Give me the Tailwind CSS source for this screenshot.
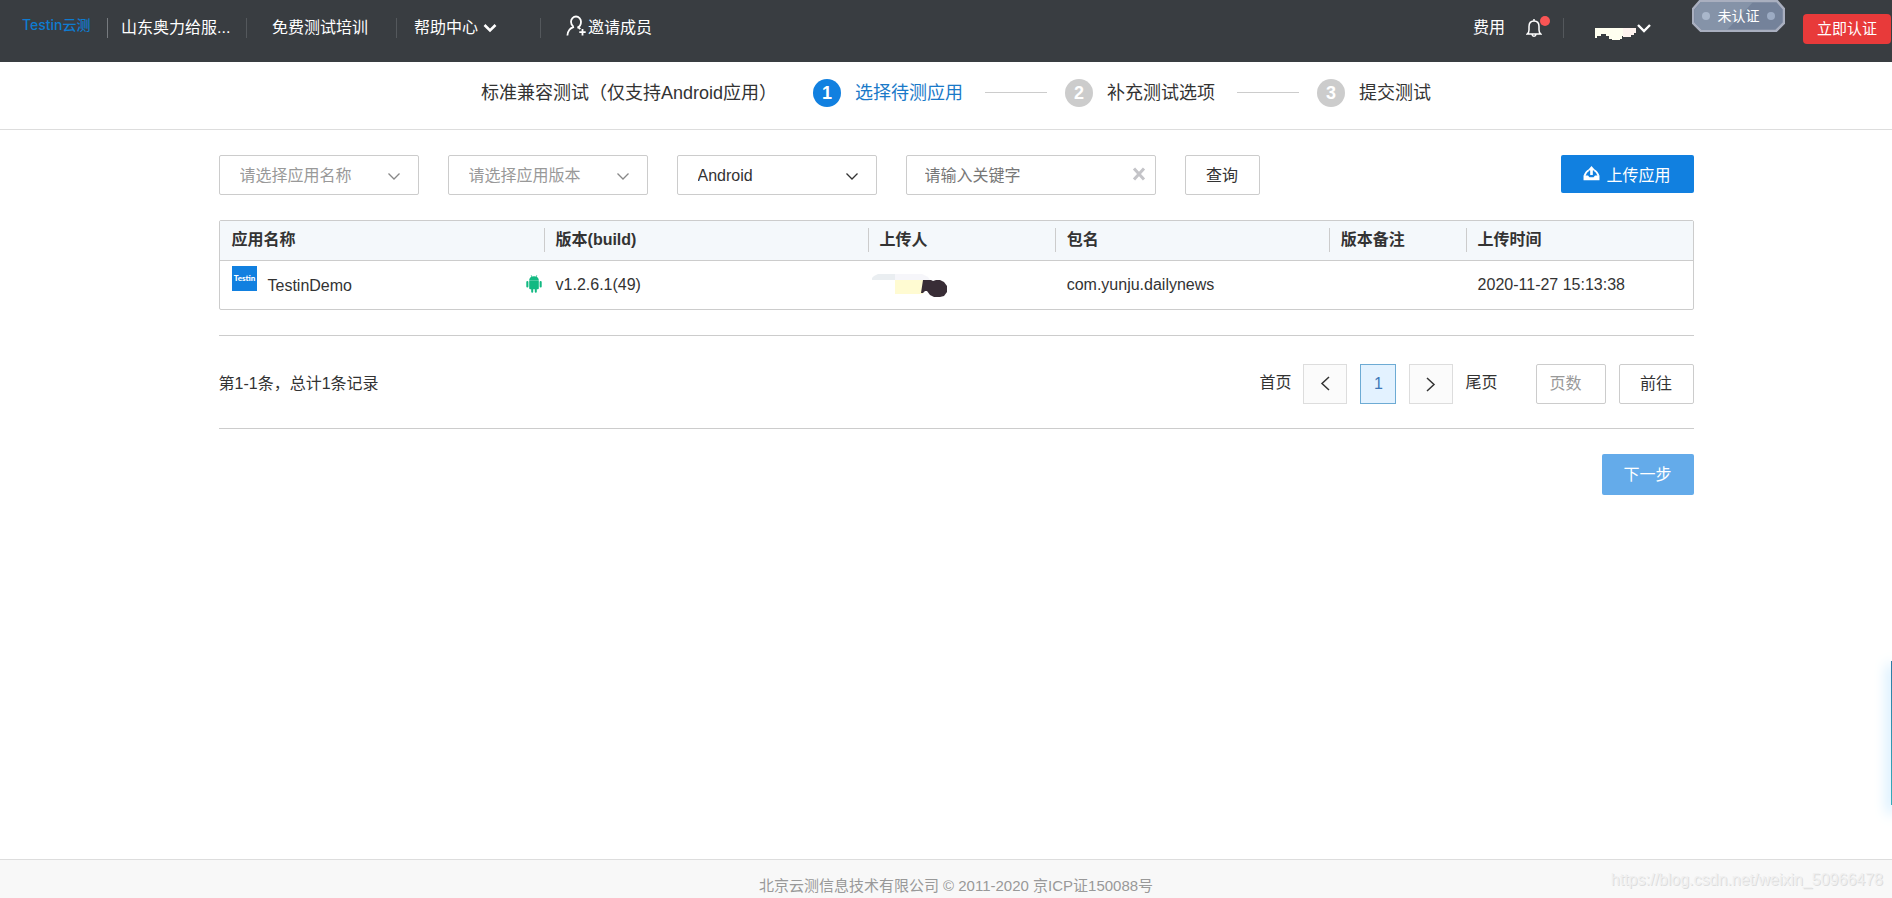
<!DOCTYPE html>
<html lang="zh-CN">
<head>
  <meta charset="UTF-8" />
  <meta name="viewport" content="width=device-width, initial-scale=1.0"/>
  <title>Testin云测 - 标准兼容测试</title>
  <script src="https://cdn.jsdelivr.net/npm/@tailwindcss/browser@4"></script>
</head>
<body class="relative min-h-screen flex flex-col overflow-x-hidden bg-white text-base text-[#333] font-['Liberation_Sans','Noto_Sans_CJK_SC',sans-serif]">

  <!-- Topo -->
  <header class="h-[62px] bg-[#393d41] text-white">
    <nav class="flex h-14 items-center whitespace-nowrap">
      <a href="#" class="ml-[22px] w-[69px] pb-[7px] text-sm font-medium leading-5 text-[#0f7bd0] font-['Inter','Noto_Sans_CJK_SC',sans-serif]">Testin云测</a>
      <span class="ml-4 h-5 w-px bg-[#777b7f]"></span>
      <a href="#" class="ml-[13px] w-[125px]">山东奥力给服...</a>
      <span class="h-5 w-px bg-[#54585c]"></span>
      <a href="#" class="ml-[25px] w-[124px]">免费测试培训</a>
      <span class="h-5 w-px bg-[#54585c]"></span>
      <a href="#" class="ml-[17px] flex w-[126px] items-center gap-1">帮助中心
        <svg class="w-4 h-4" viewBox="0 0 16 16" fill="none" stroke="currentColor" stroke-width="2.6"><path d="M2.5 5 8 10.5 13.5 5"/></svg>
      </a>
      <span class="h-5 w-px bg-[#54585c]"></span>
      <a href="#" class="ml-[25px] flex items-center">
        <svg class="w-[22px] h-[22px] mb-1" viewBox="0 0 22 22" fill="none" stroke="currentColor" stroke-width="1.8"><path d="M7.4 11.6C5.5 10.2 5 8.4 5 6.8A5 5.3 0 0 1 15 6.8C15 9.5 13.5 11.8 11.4 12.6M8 11.8C4 13 1.6 16.4 1.4 20.5M11.4 12.4C12.6 12.7 13.6 13.2 14.4 14M16.5 14v6.4M13.3 17.2h6.4"/></svg>邀请成员
      </a>

      <a href="#" class="ml-auto">费用</a>
      <a href="#" aria-label="消息" class="relative ml-[21px]">
        <svg class="w-4 h-5" viewBox="0 0 16 20" fill="none" stroke="currentColor" stroke-width="1.5"><path d="M8 1v2M1.2 16h13.6c-1.3-1-1.8-2-1.8-4V8.5C13 5 11 3 8 3S3 5 3 8.5V12c0 2-.5 3-1.8 4zM6 16.5c.3 2.3 3.7 2.3 4 0"/></svg>
        <span class="absolute -right-2 -top-[2px] h-[10px] w-[10px] rounded-full bg-[#fa5555]"></span>
      </a>
      <span class="ml-[21px] h-5 w-px bg-[#54585c]"></span>
      <a href="#" aria-label="账号" class="ml-[31px] flex items-center">
        <svg class="w-[41px] h-6" viewBox="0 0 41 24"><path fill="#fffff0" d="M0 12h28v8h-1v3h-2v2h-8v-2h-3v-3h-3v-2H6v2H2v2H0z"/><path fill="#fff4ef" d="M28 12h13v5h-2v2h-3v2h-8z"/></svg>
        <svg class="w-4 h-4" viewBox="0 0 16 16" fill="none" stroke="currentColor" stroke-width="2.4"><path d="M2 5 8 11 14 5"/></svg>
      </a>
      <span class="relative ml-10 flex h-8 w-[93px] self-start justify-center">
        <svg class="absolute inset-0 w-full h-full" viewBox="0 0 93 32">
          <path d="M8 1h77l7 8v14l-8 8H9l-8-8V9z" fill="#74829a" stroke="#a9afbf" stroke-width="2.5"/>
          <path d="M9 2h52L35 30H10l-7-7V9z" fill="#8593a8"/>
          <circle cx="14" cy="16" r="4" fill="#a9b7cb"/><circle cx="79" cy="16" r="4" fill="#9cabc3"/>
        </svg>
        <span class="relative text-sm leading-8">未认证</span>
      </span>
      <button class="ml-[18px] mr-px mt-[2px] h-[30px] w-[88px] rounded-sm bg-[#e83a3a] text-[15px]">立即认证</button>
    </nav>
  </header>

  <!-- Etapas -->
  <div class="border-b border-[#ddd] pl-5">
    <div class="flex h-[67px] items-center justify-center whitespace-nowrap pb-[5px] text-lg">
      <h1 class="mr-9">标准兼容测试（仅支持Android应用）</h1>
      <ol class="flex items-center">
        <li class="flex items-center text-[#1a79c8]">
          <span class="mr-[14px] h-7 w-7 rounded-full bg-[#1180e0] text-center font-bold leading-7 text-white">1</span>选择待测应用
          <span class="ml-[22px] mr-[18px] mt-[13px] h-px w-[62px] self-start bg-[#ccc]"></span>
        </li>
        <li class="flex items-center">
          <span class="mr-[14px] h-7 w-7 rounded-full bg-[#ccc] text-center font-bold leading-7 text-white">2</span>补充测试选项
          <span class="ml-[22px] mr-[18px] mt-[13px] h-px w-[62px] self-start bg-[#ccc]"></span>
        </li>
        <li class="flex items-center">
          <span class="mr-[14px] h-7 w-7 rounded-full bg-[#ccc] text-center font-bold leading-7 text-white">3</span>提交测试
        </li>
      </ol>
    </div>
  </div>

  <main class="grow pl-5">
    <div class="mx-auto max-w-[1475px] pt-[25px]">

      <!-- Filtros -->
      <form class="flex items-start gap-[29px]">
        <div class="relative w-[200px]">
          <select aria-label="应用名称" class="h-10 w-full appearance-none rounded-xs border border-[#ccc] bg-white pl-5 pt-px text-[#999]">
            <option>请选择应用名称</option>
          </select>
          <svg class="pointer-events-none absolute right-[17px] top-[13px] h-4 w-4" viewBox="0 0 16 16" fill="none" stroke="#888" stroke-width="1.3"><path d="M2.5 5.5 8 11 13.5 5.5"/></svg>
        </div>
        <div class="relative w-[200px]">
          <select aria-label="应用版本" class="h-10 w-full appearance-none rounded-xs border border-[#ccc] bg-white pl-5 pt-px text-[#999]">
            <option>请选择应用版本</option>
          </select>
          <svg class="pointer-events-none absolute right-[17px] top-[13px] h-4 w-4" viewBox="0 0 16 16" fill="none" stroke="#888" stroke-width="1.3"><path d="M2.5 5.5 8 11 13.5 5.5"/></svg>
        </div>
        <div class="relative w-[200px]">
          <select aria-label="系统" class="h-10 w-full appearance-none rounded-xs border border-[#ccc] bg-white pl-5 pt-px">
            <option>Android</option>
            <option>iOS</option>
          </select>
          <svg class="pointer-events-none absolute right-[17px] top-[13px] h-4 w-4" viewBox="0 0 16 16" fill="none" stroke="#333" stroke-width="1.3"><path d="M2.5 5.5 8 11 13.5 5.5"/></svg>
        </div>
        <div class="relative w-[250px]">
          <input type="text" aria-label="关键字" placeholder="请输入关键字" class="h-10 w-full rounded-xs border border-[#ccc] pl-[18px] pt-px placeholder:text-[#777]" />
          <button type="button" aria-label="清除" class="absolute right-[10px] top-3">
            <svg class="h-[14px] w-[14px]" viewBox="0 0 14 14" stroke="#c4c4c8" stroke-width="3"><path d="M2 1.5 12 12.5M12 1.5 2 12.5"/></svg>
          </button>
        </div>
        <button type="button" class="h-10 w-[75px] rounded-xs border border-[#ccc] pt-px">查询</button>
        <button type="button" class="ml-auto flex h-[38px] w-[133px] items-center justify-center gap-[6px] rounded-xs bg-[#1180e0] pt-[3px] text-white">
          <svg class="h-[15px] w-[17px] mb-1" viewBox="0 0 18 16" fill="none" stroke="currentColor" stroke-width="2"><path d="M6 4.5C4 5.5 2.5 7.8 1.5 10.5M12 4.5C14 5.5 15.5 7.8 16.5 10.5"/><path fill="currentColor" stroke="none" d="M9 0 13.2 4.8H10.4V9.5H7.6V4.8H4.8zM.5 10h4.8l1.5 2h4.4l1.5-2h4.8v5.2H.5z"/></svg>上传应用
        </button>
      </form>

      <!-- Tabela de aplicativos -->
      <div class="mt-[25px] rounded-xs border border-[#ccc]">
        <table class="w-full table-fixed text-left">
          <thead class="bg-[#f4f8fb]">
            <tr class="h-[39px] border-b border-[#ccc]">
              <th class="w-[22%] p-0"><div class="pl-3">应用名称</div></th>
              <th class="w-[22%] p-0"><div class="border-l border-[#ccc] pl-[11px]">版本(build)</div></th>
              <th class="w-[12.7%] p-0"><div class="border-l border-[#ccc] pl-[11px]">上传人</div></th>
              <th class="w-[18.6%] p-0"><div class="border-l border-[#ccc] pl-[11px]">包名</div></th>
              <th class="w-[9.3%] p-0"><div class="border-l border-[#ccc] pl-[11px]">版本备注</div></th>
              <th class="p-0"><div class="border-l border-[#ccc] pl-[11px]">上传时间</div></th>
            </tr>
          </thead>
          <tbody>
            <tr class="h-[49px]">
              <td class="p-0">
                <div class="flex h-[38px] items-start pl-3 pr-[2px]">
                  <svg class="h-[25px] w-[25px]" viewBox="0 0 25 25"><rect width="25" height="25" fill="#1180e0"/><text x="12.5" y="15" text-anchor="middle" font-family="Lato" font-size="8" font-weight="900" fill="#fff">Testin</text></svg>
                  <span class="ml-[11px] mt-2 leading-6">TestinDemo</span>
                  <svg class="ml-auto mt-[9px] h-[18px] w-4" viewBox="0 0 16 18" fill="#12b982"><path d="M3.2 5.3C3.3 3.5 4.3 2.2 5.5 1.7L4.7.4 5.2.1 6.1 1.5Q8 1 9.9 1.5L10.8.1 11.3.4 10.5 1.7C11.7 2.2 12.7 3.5 12.8 5.3zM3.2 5.6h9.6v7.6q0 1-1 1H10.8v2.6a1 1 0 0 1-2 0v-2.6H7.2v2.6a1 1 0 0 1-2 0v-2.6H4.2q-1 0-1-1z"/><rect x=".3" y="6" width="2.1" height="6.5" rx="1"/><rect x="13.6" y="6" width="2.1" height="6.5" rx="1"/></svg>
                </div>
              </td>
              <td class="p-0 pl-3">v1.2.6.1(49)</td>
              <td class="p-0 pl-1">
                <svg class="h-6 w-[76px]" viewBox="0 0 76 24"><path fill="#eaeef1" d="M0 7V5l2-2 4-2h17v6z"/><path fill="#f6f6fa" d="M23 1h27l6 3 2 3H23z"/><path fill="#fffbd2" d="M23 7h28v14H23z"/><path fill="#382d36" d="M51 7h8l2 1 3-1h4l4 2 3 4v6l-3 4-4 1h-6l-4-2-3-4h-2l-2 2h-2z"/></svg>
              </td>
              <td class="p-0 pl-3">com.yunju.dailynews</td>
              <td class="p-0 pl-3"></td>
              <td class="p-0 pl-3">2020-11-27 15:13:38</td>
            </tr>
          </tbody>
        </table>
      </div>

      <!-- Paginação -->
      <div class="mt-[25px] flex h-[94px] items-center justify-between border-y border-[#ccc] pt-1">
        <p>第1-1条，总计1条记录</p>
        <div class="flex items-center">
          <a href="#" class="mr-3 pb-[2px]">首页</a>
          <button aria-label="上一页" class="flex h-10 w-11 items-center justify-center border border-[#ddd] bg-[#fbfbfb]">
            <svg class="h-4 w-4" viewBox="0 0 16 16" fill="none" stroke="#333" stroke-width="1.5"><path d="M12 1 5 7.5 12 14"/></svg>
          </button>
          <button class="mx-[13px] h-10 w-9 border border-[#6dabd4] bg-[#e3f2ff] text-[#3d78b8]">1</button>
          <button aria-label="下一页" class="flex h-10 w-11 items-center justify-center border border-[#ddd] bg-[#fbfbfb]">
            <svg class="h-4 w-4" viewBox="0 0 16 16" fill="none" stroke="#333" stroke-width="1.5"><path d="M4 2 11 8.5 4 15"/></svg>
          </button>
          <a href="#" class="ml-3 pb-[2px]">尾页</a>
          <input type="text" aria-label="页数" placeholder="页数" class="ml-[38px] h-10 w-[70px] rounded-xs border border-[#ccc] pl-[13px] placeholder:text-[#999]" />
          <button class="ml-[13px] h-10 w-[75px] rounded-xs border border-[#ccc]">前往</button>
        </div>
      </div>

      <div class="flex justify-end pt-[25px]">
        <button class="h-[41px] w-[92px] rounded-xs bg-[#64abea] text-white">下一步</button>
      </div>
    </div>
  </main>

  <!-- Rodapé -->
  <footer class="relative h-[39px] border-t border-[#ddd] bg-[#f8f8f8] pl-5 text-center text-[15px] leading-[18px] text-[#999]">
    <p class="pt-[17px]">北京云测信息技术有限公司 © 2011-2020 京ICP证150088号</p>
    <span class="absolute right-[9px] top-2 text-base text-[#f0f0f0] text-shadow-[1px_1px_0px_#ddd]">https://blog.csdn.net/weixin_50966478</span>
  </footer>

  <!-- Aba lateral -->
  <div class="absolute bottom-[93px] right-0 h-36 w-px bg-linear-to-b from-[#2d7ba5] to-[#35adbb] shadow-[0_6px_14px_2px_#a5daff]"></div>

</body>
</html>
